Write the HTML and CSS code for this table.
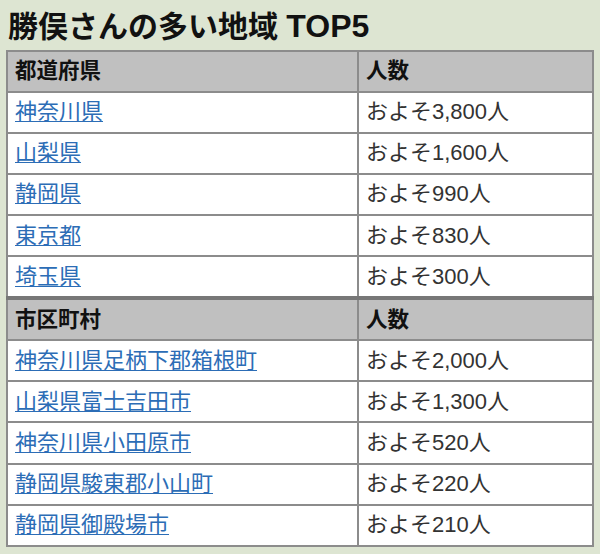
FILE: index.html
```html
<!DOCTYPE html>
<html lang="ja">
<head>
<meta charset="utf-8">
<link rel="stylesheet" href="styles.css">
</head>
<body>
<h1 class="title">勝俣さんの多い地域 <span class="latin">TOP5</span></h1>
<table class="rank">
  <tr class="head"><th class="c1">都道府県</th><th class="c2">人数</th></tr>
  <tr><td><a href="#">神奈川県</a></td><td>およそ3,800人</td></tr>
  <tr><td><a href="#">山梨県</a></td><td>およそ1,600人</td></tr>
  <tr><td><a href="#">静岡県</a></td><td>およそ990人</td></tr>
  <tr><td><a href="#">東京都</a></td><td>およそ830人</td></tr>
  <tr><td><a href="#">埼玉県</a></td><td>およそ300人</td></tr>
  <tr class="head sep"><th>市区町村</th><th>人数</th></tr>
  <tr><td><a href="#">神奈川県足柄下郡箱根町</a></td><td>およそ2,000人</td></tr>
  <tr><td><a href="#">山梨県富士吉田市</a></td><td>およそ1,300人</td></tr>
  <tr><td><a href="#">神奈川県小田原市</a></td><td>およそ520人</td></tr>
  <tr><td><a href="#">静岡県駿東郡小山町</a></td><td>およそ220人</td></tr>
  <tr><td><a href="#">静岡県御殿場市</a></td><td>およそ210人</td></tr>
</table>
</body>
</html>
```

FILE: styles.css
```css
html, body {
  margin: 0;
  padding: 0;
  background: #dde5d2;
}
body {
  padding: 0 6px;
  font-family: "Liberation Sans", "Noto Sans CJK JP", sans-serif;
}
.title {
  margin: 0 0 3px 2px;
  padding-top: 6px;
  font-size: 30px;
  line-height: 40px;
  font-weight: bold;
  color: #111;
}
.title .latin {
  font-size: 32px;
}
.rank {
  width: 588px;
  border-collapse: collapse;
  border: 2px solid #858585;
  background: #fff;
}
.rank th, .rank td {
  border: 2px solid #8c8c8c;
  padding: 0 0 0 7px;
  text-align: left;
  font-size: 22px;
  line-height: 28px;
  height: 39.2px;
}
.rank th {
  background: #c0c0c0;
  color: #111;
  font-weight: bold;
  font-size: 21.5px;
  height: 38.5px;
}
.rank .c1 { width: 342px; }
.rank td { color: #333; }
.rank a {
  color: #2c6db6;
  text-decoration: underline;
  text-decoration-thickness: 1px;
  text-underline-offset: 2px;
}
.rank tr.sep th {
  border-top: 4px solid #777;
}
```
